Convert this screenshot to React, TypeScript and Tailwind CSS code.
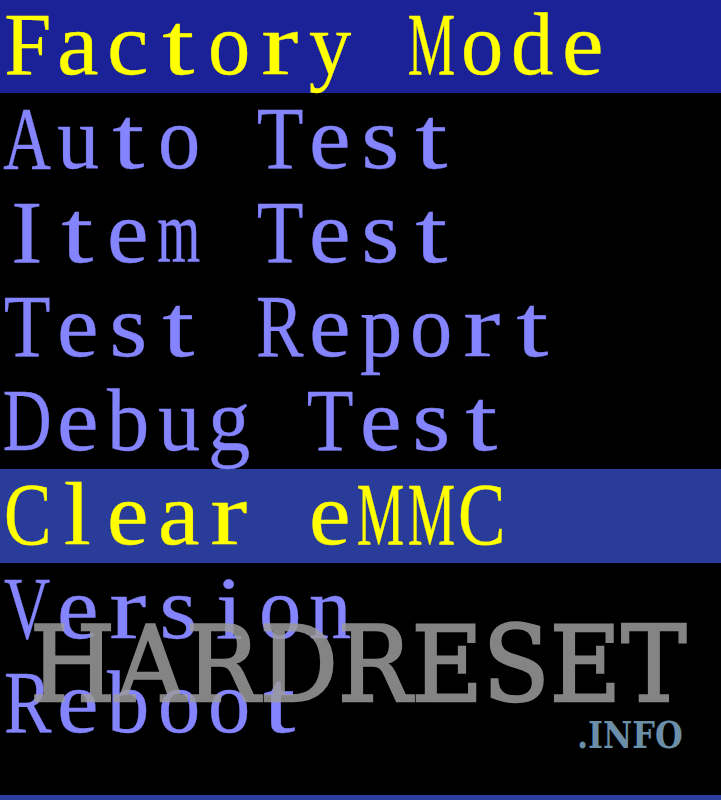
const items = [
  { label: "Auto Test", active: false },
  { label: "Item Test", active: false },
  { label: "Test Report", active: false },
  { label: "Debug Test", active: false },
  { label: "Clear eMMC", active: true },
  { label: "Version", active: false },
  { label: "Reboot", active: false },
];

// horizontal squeeze per glyph so Times fits the fixed cells of the device font
const squeeze: Record<string, number> = {
  A: 0.74, B: 0.8, C: 0.8, D: 0.76, E: 0.82, F: 0.95, I: 1.05, M: 0.6, R: 0.8, T: 0.86, V: 0.72,
  a: 1.05, b: 0.95, c: 1.05, d: 0.95, e: 1.05, g: 0.95, i: 1.1, l: 1.1, m: 0.62, n: 0.95,
  o: 0.95, p: 0.95, r: 1.25, s: 1.1, t: 1.3, u: 0.95, y: 0.95,
};

function MonoText({ text }: { text: string }) {
  return (
    <div className="flex text-[89px] leading-none [-webkit-text-stroke:0.35px_currentColor]">
      {text.split("").map((ch, i) => (
        <span key={i} className="flex w-[50.5px] shrink-0 justify-center">
          <span
            className="inline-block whitespace-pre"
            style={{ transform: `scaleX(${squeeze[ch] ?? 0.95})` }}
          >
            {ch}
          </span>
        </span>
      ))}
    </div>
  );
}

function Row({ label, active }: { label: string; active?: boolean }) {
  return (
    <div
      className={`flex h-[94px] items-end pb-[4px] pl-[2px] ${
        active ? "bg-[#293c99] text-[#ffff00]" : "text-[#8484ff]"
      }`}
    >
      <MonoText text={label} />
    </div>
  );
}

export default function App() {
  return (
    <div
      className="relative h-[800px] w-[721px] overflow-hidden bg-black"
      style={{ fontFamily: '"Liberation Serif", "DejaVu Serif", serif' }}
    >
      <div className="flex h-[93px] items-end bg-[#1b2197] pb-[4px] pl-[2px] text-[#ffff00]">
        <MonoText text="Factory Mode" />
      </div>
      <div className="flex flex-col">
        {items.map((it) => (
          <Row key={it.label} label={it.label} active={it.active} />
        ))}
      </div>
      <div className="absolute bottom-0 left-0 h-[5px] w-full bg-[#2b3fa0]" />

      {/* watermark */}
      <div
        className="pointer-events-none absolute left-[30px] top-[613px] origin-left scale-x-[0.94] whitespace-pre text-[104px] leading-none text-[#9c9c9c] opacity-85 [-webkit-text-stroke:2.5px_#9c9c9c]"
        style={{ fontFamily: '"DejaVu Serif", "Liberation Serif", serif' }}
      >
        HARDRESET
      </div>
      <div
        className="pointer-events-none absolute left-[577px] top-[716px] origin-left scale-x-[0.84] whitespace-pre text-[38px] font-bold leading-none text-[#6b8fa8]"
        style={{ fontFamily: '"DejaVu Serif", "Liberation Serif", serif' }}
      >
        .INFO
      </div>
    </div>
  );
}
